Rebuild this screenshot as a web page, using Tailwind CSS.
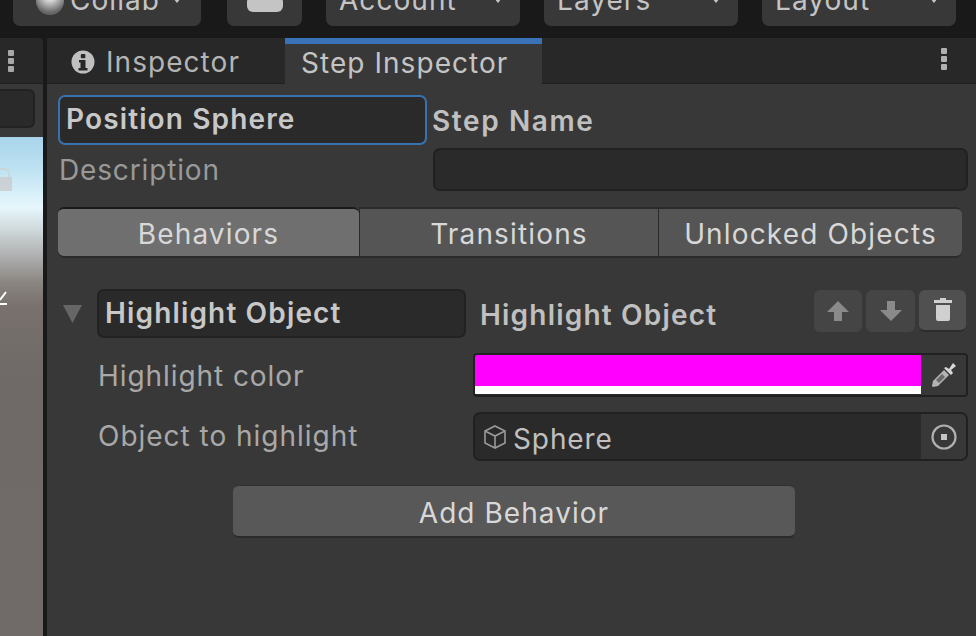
<!DOCTYPE html>
<html><head><meta charset="utf-8">
<script src="https://cdn.jsdelivr.net/npm/@tailwindcss/browser@4"></script>
</head>
<body class="m-0 bg-[#191919]">
<div class="w-[976px] h-[636px] overflow-hidden flex flex-col font-['Inter','Liberation_Sans',sans-serif] text-[28px] tracking-[1.05px] text-[#c4c4c4]">
  <!-- toolbar -->
  <div class="h-[38px] shrink-0 bg-[#191919] flex pl-[13px] gap-[24px] overflow-hidden">
    <div class="w-[188px] h-[52px] -mt-[26px] rounded-[7px] bg-[#383838] flex items-center pl-[23px] pr-[20px]">
      <div class="w-[28px] h-[28px] rounded-full mr-[6px] mt-[1px] bg-[radial-gradient(circle_at_50%_30%,#ffffff_0%,#d0d0d0_25%,#6a6a6a_70%,#555_100%)]"></div>
      <span class="leading-none">Collab</span>
      <span class="ml-auto w-0 h-0 border-x-[4px] border-x-transparent border-t-[5px] border-t-[#c4c4c4]"></span>
    </div>
    <div class="w-[75px] h-[52px] -mt-[26px] ml-[2px] rounded-[7px] bg-[#383838] flex items-center justify-center">
      <svg width="36" height="52" viewBox="0 0 36 52"><rect x="0" y="22" width="36" height="16" rx="6" fill="#c4c4c4"/></svg>
    </div>
    <div class="w-[194px] h-[52px] -mt-[26px] rounded-[7px] bg-[#383838] flex items-center pl-[13px] pr-[18px]">
      <span class="leading-none">Account</span>
      <span class="ml-auto w-0 h-0 border-x-[4px] border-x-transparent border-t-[5px] border-t-[#c4c4c4]"></span>
    </div>
    <div class="w-[194px] h-[52px] -mt-[26px] rounded-[7px] bg-[#383838] flex items-center pl-[13px] pr-[18px]">
      <span class="leading-none">Layers</span>
      <span class="ml-auto w-0 h-0 border-x-[4px] border-x-transparent border-t-[5px] border-t-[#c4c4c4]"></span>
    </div>
    <div class="w-[194px] h-[52px] -mt-[26px] rounded-[7px] bg-[#383838] flex items-center pl-[13px] pr-[18px]">
      <span class="leading-none">Layout</span>
      <span class="ml-auto w-0 h-0 border-x-[4px] border-x-transparent border-t-[5px] border-t-[#c4c4c4]"></span>
    </div>
  </div>

  <div class="flex-1 flex min-h-0">
    <!-- left scene column -->
    <div class="w-[43px] shrink-0 flex flex-col">
      <div class="h-[46px] shrink-0 bg-[#282828] border-b-[1px] border-[#1e1e1e] flex flex-col items-center justify-center gap-[2px] rounded-tr-[4px]">
        <span class="w-[6px] h-[6px] rounded-[1px] bg-[#a8a8a8] ml-[-22px]"></span>
        <span class="w-[6px] h-[6px] rounded-[1px] bg-[#a8a8a8] ml-[-22px]"></span>
        <span class="w-[6px] h-[6px] rounded-[1px] bg-[#a8a8a8] ml-[-22px]"></span>
      </div>
      <div class="h-[53px] shrink-0 bg-[#383838] pt-[5px] pr-[8px]">
        <div class="h-[39px] bg-[#2a2a2a] border-[2px] border-l-0 border-[#222] rounded-r-[6px]"></div>
      </div>
      <div class="flex-1 relative bg-[linear-gradient(180deg,#a8d4ea_0px,#bce1f1_30px,#e6f7fc_70px,#cfd8da_93px,#a9a9a9_123px,#8a8580_146px,#78716e_170px,#6f6a67_240px,#706b68_100%)]">
        <svg class="absolute left-0 top-[30px]" width="14" height="26" viewBox="0 0 14 26"><path d="M0 2 H4 Q9 2 9 7 V10" fill="none" stroke="#cfcfcf" stroke-opacity="0.7" stroke-width="2"/><rect x="0" y="10" width="12" height="14" fill="#c9c9c9" fill-opacity="0.75"/></svg>
        <svg class="absolute left-0 top-[152px]" width="8" height="20" viewBox="0 0 8 20"><path d="M0 11 L6 3 M0 15 H7" stroke="#fff" stroke-width="2" fill="none"/></svg>
      </div>
    </div>
    <div class="w-[4px] shrink-0 bg-[#191919]"></div>

    <!-- inspector -->
    <div class="flex-1 flex flex-col min-w-0 bg-[#383838]">
      <div class="h-[46px] shrink-0 bg-[#282828] flex relative">
        <div class="w-[238px] h-[46px] border-b-[1px] border-[#1e1e1e] flex items-center pl-[24px] text-[#b4b4b4]">
          <svg class="mr-[11px] mt-[3px]" width="24" height="24" viewBox="0 0 24 24"><circle cx="12" cy="12" r="11.5" fill="#c0c0c0"/><rect x="9.8" y="4" width="4.6" height="4.2" rx="1" fill="#282828"/><path d="M8 10 h6.5 v8 h2 v2.6 h-9 v-2.6 h2 v-5.4 h-1.5 z" fill="#282828"/></svg>
          <span class="leading-none mt-[3px]">Inspector</span>
        </div>
        <div class="w-[257px] bg-[#383838] border-t-[6px] border-[#3a72b8] flex items-center pl-[16px] pb-[2px]">
          <span class="leading-none">Step Inspector</span>
        </div>
        <div class="flex-1 border-b-[1px] border-[#1e1e1e] flex justify-end pr-[29px]">
          <div class="flex flex-col gap-[2px] pt-[10px]">
            <span class="w-[6px] h-[6px] rounded-[1px] bg-[#b0b0b0]"></span>
            <span class="w-[6px] h-[6px] rounded-[1px] bg-[#b0b0b0]"></span>
            <span class="w-[6px] h-[6px] rounded-[1px] bg-[#b0b0b0]"></span>
          </div>
        </div>
      </div>

      <div class="flex-1 pl-[11px] pr-[8px] pt-[11px] flex flex-col">
        <!-- name -->
        <div class="flex items-center h-[50px] shrink-0">
          <div class="w-[369px] h-[50px] rounded-[7px] border-[2px] border-[#3a72b0] bg-[#2a2a2a] flex items-center pl-[6px] pb-[3px] font-semibold tracking-[1.13px] text-[#c8c8c8]">Position Sphere</div>
          <div class="ml-[5px] mt-[2px] font-semibold tracking-[1.6px] text-[#c0c0c0] leading-none">Step Name</div>
        </div>
        <!-- description -->
        <div class="flex items-center h-[43px] mt-[3px] shrink-0">
          <div class="w-[375px] pl-[1px] tracking-[0.85px] text-[#999999] leading-none">Description</div>
          <div class="flex-1 h-[43px] rounded-[7px] border-[2px] border-[#212121] bg-[#2a2a2a]"></div>
        </div>
        <!-- tabs -->
        <div class="flex mt-[16px] h-[51px] w-[904px] shrink-0 text-[#d8d8d8] tracking-[1.15px] border-b-[2px] border-[#2a2a2a] rounded-[7px]">
          <div class="w-[301px] bg-[#6f6f6f] rounded-l-[6px] rounded-tr-[6px] flex items-center justify-center border-t-[2px] border-[#1a1a1a] pt-[2px]">Behaviors</div>
          <div class="w-[1px] bg-[#2a2a2a]"></div>
          <div class="w-[298px] bg-[#555555] border-t-[2px] border-[#2a2a2a] flex items-center justify-center pt-[2px]">Transitions</div>
          <div class="w-[1px] bg-[#2a2a2a]"></div>
          <div class="flex-1 bg-[#555555] border-t-[2px] border-[#2a2a2a] rounded-r-[6px] flex items-center justify-center pt-[2px]">Unlocked Objects</div>
        </div>
        <!-- behavior header -->
        <div class="flex items-center h-[49px] mt-[31px] shrink-0">
          <div class="w-[39px] pl-[5px] shrink-0">
            <svg width="20" height="20" viewBox="0 0 20 20"><path d="M0 1 H19 L9.5 19 z" fill="#666666"/></svg>
          </div>
          <div class="w-[369px] h-[49px] rounded-[7px] border-[2px] border-[#222] bg-[#2a2a2a] flex items-center pl-[6px] font-semibold tracking-[1.15px] text-[#c8c8c8] shrink-0 pb-[2px]">Highlight Object</div>
          <div class="ml-[14px] font-semibold tracking-[1.2px] text-[#c0c0c0] leading-none mt-[2px]">Highlight Object</div>
          <div class="ml-auto mr-[2px] flex gap-[4px] -mt-[5px]">
            <div class="w-[48px] h-[42px] rounded-[6px] bg-[#454545] flex items-center justify-center">
              <svg width="22" height="22" viewBox="0 0 22 22"><path d="M11 1 L22 12 H15 V21 H7 V12 H0 z" fill="#8a8a8a"/></svg>
            </div>
            <div class="w-[49px] h-[42px] rounded-[6px] bg-[#454545] flex items-center justify-center">
              <svg width="22" height="22" viewBox="0 0 22 22"><path d="M11 21 L22 10 H15 V1 H7 V10 H0 z" fill="#8a8a8a"/></svg>
            </div>
            <div class="w-[47px] h-[42px] rounded-[6px] bg-[#505050] border-b-[2px] border-[#2c2c2c] flex items-center justify-center">
              <svg width="20" height="24" viewBox="0 0 20 24"><path d="M7 0 H13 V2 H19 V5 H1 V2 H7 z M3 7 H17 V21 Q17 23 15 23 H5 Q3 23 3 21 z" fill="#d0d0d0"/></svg>
            </div>
          </div>
        </div>
        <!-- highlight color -->
        <div class="flex items-start mt-[15px] shrink-0">
          <div class="w-[415px] pl-[40px] tracking-[0.93px] text-[#a8a8a8] leading-none pt-[9px]">Highlight color</div>
          <div class="w-[495px] h-[44px] shrink-0 flex bg-[#2a2a2a] border-[2px] border-[#212121] rounded-[4px] overflow-hidden">
            <div class="w-[446px] shrink-0 flex flex-col">
              <div class="h-[31px] bg-[#ff00ff]"></div>
              <div class="h-[8px] bg-white"></div>
            </div>
            <div class="flex-1 bg-[#383838] flex items-center justify-center">
              <svg width="26" height="26" viewBox="0 0 26 26"><path d="M15 5 L18 7 L22 1 L25 4 L20 8 L22 11 L20 13 L13 6 z" fill="#d8d8d8"/><path d="M13 8 L18 13 L7 24 L2 25 L1 24 L2 19 z" fill="#b4b4b4"/><path d="M11 12 L14 15 L8 21 L5 18 z" fill="#6a6a6a"/></svg>
            </div>
          </div>
        </div>
        <!-- object -->
        <div class="flex items-start mt-[15px] shrink-0">
          <div class="w-[415px] pl-[40px] tracking-[0.98px] text-[#a8a8a8] leading-none pt-[10px]">Object to highlight</div>
          <div class="w-[495px] h-[49px] shrink-0 flex bg-[#2a2a2a] border-[2px] border-[#212121] rounded-[7px] overflow-hidden">
            <div class="flex-1 flex items-center pl-[8px] tracking-[0.9px] text-[#c0c0c0]">
              <svg class="mr-[6px]" width="24" height="26" viewBox="0 0 24 26"><path d="M12 2 L22 7 V19 L12 24 L2 19 V7 z M2 7 L12 12 L22 7 M12 12 V24" fill="none" stroke="#9a9a9a" stroke-width="1.6"/></svg>
              <span class="leading-none mt-[4px]">Sphere</span>
            </div>
            <div class="w-[45px] bg-[#383838] flex items-center justify-center">
              <svg width="26" height="26" viewBox="0 0 26 26"><circle cx="13" cy="13" r="11.5" fill="none" stroke="#b0b0b0" stroke-width="2.2"/><rect x="10" y="10" width="6" height="6" fill="#c4c4c4"/></svg>
            </div>
          </div>
        </div>
        <!-- add -->
        <div class="ml-[175px] mt-[24px] w-[562px] h-[53px] shrink-0 rounded-[6px] bg-[#585858] border-b-[2px] border-[#2a2a2a] border-t-[1px] border-t-[#303030] flex items-center justify-center pt-[3px] text-[#d8d8d8]">Add Behavior</div>
      </div>
    </div>
  </div>
</div>
</body></html>
